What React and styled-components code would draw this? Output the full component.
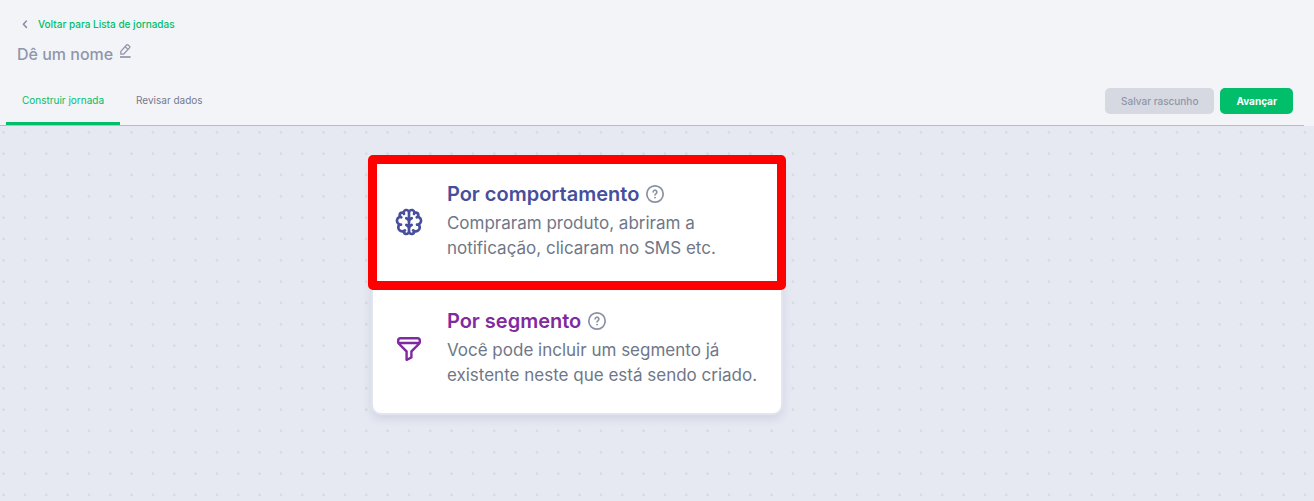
import React from 'react';
import styled, { createGlobalStyle } from 'styled-components';

const options = [
  {
    id: 'behavior',
    title: 'Por comportamento',
    text: 'Compraram produto, abriram a notificação, clicaram no SMS etc.',
    color: '#474f9c',
    highlighted: true,
  },
  {
    id: 'segment',
    title: 'Por segmento',
    text: 'Você pode incluir um segmento já existente neste que está sendo criado.',
    color: '#7f2a9f',
    highlighted: false,
  },
];

const halfBrain =
  'M12,2.78A3,3,0,0,0,7.18,4L7,4A3,3,0,0,0,4,7a3,3,0,0,0,0,.52,4,4,0,0,0-.55,6.59A4,4,0,0,0,7,20l.18,0A3,3,0,0,0,12,21.22ZM11,8.55a4.72,4.72,0,0,0-.68-.32,1,1,0,0,0-.64,1.9A2,2,0,0,1,11,12v1.55a4.72,4.72,0,0,0-.68-.32,1,1,0,0,0-.64,1.9A2,2,0,0,1,11,17v2a1,1,0,0,1-1,1,1,1,0,0,1-.91-.6,4.07,4.07,0,0,0,.48-.33,1,1,0,1,0-1.28-1.54A2,2,0,0,1,7,18a2,2,0,0,1-2-2,2,2,0,0,1,.32-1.06A3.82,3.82,0,0,0,6,15a1,1,0,0,0,0-2,1.84,1.84,0,0,1-.69-.13A2,2,0,0,1,5.25,9.1a3.1,3.1,0,0,0,.46.35,1,1,0,1,0,1-1.74.9.9,0,0,1-.34-.33A.92.92,0,0,1,6,7,1,1,0,0,1,7,6a.76.76,0,0,1,.21,0,3.85,3.85,0,0,0,.19.47,1,1,0,0,0,1.37.37A1,1,0,0,0,9.13,5.5,1.06,1.06,0,0,1,9,5a1,1,0,0,1,2,0Z';

const BrainIcon = () => (
  <svg width="32" height="32" viewBox="0 0 24 24" fill="currentColor" fillRule="evenodd" aria-hidden="true">
    <path d={halfBrain} />
    <path d={halfBrain} transform="translate(24 0) scale(-1 1)" />
  </svg>
);

const FilterIcon = () => (
  <svg width="32" height="32" viewBox="-1.3 -1.3 26.6 26.6" fill="currentColor" aria-hidden="true">
    <path d="M19,2H5A3,3,0,0,0,2,5V6.17a3,3,0,0,0,.25,1.2l0,.06a2.81,2.81,0,0,0,.59.86L9,14.41V21a1,1,0,0,0,.47.85A1,1,0,0,0,10,22a1,1,0,0,0,.45-.11l4-2A1,1,0,0,0,15,19V14.41l6.12-6.12a2.81,2.81,0,0,0,.59-.86l0-.06A3,3,0,0,0,22,6.17V5A3,3,0,0,0,19,2ZM13.29,13.29A1,1,0,0,0,13,14v4.38l-2,1V14a1,1,0,0,0-.29-.71L5.41,8H18.59ZM20,6H4V5A1,1,0,0,1,5,4H19a1,1,0,0,1,1,1Z" />
  </svg>
);

const HelpIcon = () => (
  <svg width="20" height="20" viewBox="0 0 20 20" fill="none" stroke="currentColor" strokeLinecap="round" aria-hidden="true">
    <circle cx="10" cy="10" r="8.2" strokeWidth="1.7" />
    <path d="M8.1 8a1.9 1.9 0 1 1 2.9 1.7c-.7.4-1 .7-1 1.3" strokeWidth="1.6" />
    <circle cx="10" cy="13.6" r="0.95" fill="currentColor" stroke="none" />
  </svg>
);

const PencilIcon = () => (
  <svg width="13" height="16" viewBox="0 0 13 16" fill="none" stroke="currentColor" strokeWidth="1.3" strokeLinejoin="round" aria-hidden="true">
    <path d="M1.8 11.2V8.4L7.6 2a1.1 1.1 0 0 1 1.6 0l1.3 1.3a1.1 1.1 0 0 1 0 1.6l-6 6.3z" />
    <path d="M6.2 3.6l2.8 2.9" />
    <path d="M1 14h10.6" strokeWidth="1.7" />
  </svg>
);

const ChevronIcon = () => (
  <svg width="6" height="10" viewBox="0 0 6 10" fill="none" stroke="currentColor" strokeWidth="1.6" strokeLinecap="round" strokeLinejoin="round" aria-hidden="true">
    <path d="M4.4 2L1.4 5.2l3 3.2" />
  </svg>
);

const dotX = [3.7, 25, 46.3];
const dotY = [6.3, 27.7, 49];

const Dots = () => (
  <DotLayer aria-hidden="true">
    <pattern id="dots" width="64" height="64" patternUnits="userSpaceOnUse">
      {dotY.map((y) => dotX.map((x) => <circle key={`${x}-${y}`} cx={x} cy={y} r="1.4" fill="#d8dbe1" />))}
    </pattern>
    <rect width="100%" height="100%" fill="url(#dots)" />
  </DotLayer>
);

const App = () => {
  return (
    <>
      <GlobalStyle />
      <Page>
        <Header>
          <BackLink href="#jornadas">
            <ChevronIcon />
            Voltar para Lista de jornadas
          </BackLink>
          <TitleRow>
            <Title>Dê um nome</Title>
            <EditButton aria-label="Editar nome">
              <PencilIcon />
            </EditButton>
          </TitleRow>
          <Toolbar>
            <Tabs>
              <Tab $active>Construir jornada</Tab>
              <Tab>Revisar dados</Tab>
            </Tabs>
            <Actions>
              <ActionButton disabled>Salvar rascunho</ActionButton>
              <ActionButton $primary>Avançar</ActionButton>
            </Actions>
          </Toolbar>
        </Header>
        <Canvas>
          <Dots />
          <Card>
            {options.map((item) => (
              <Option key={item.id}>
                <OptionIcon $color={item.color}>
                  {item.id === 'behavior' ? <BrainIcon /> : <FilterIcon />}
                </OptionIcon>
                <OptionBody>
                  <OptionHeading>
                    <OptionTitle $color={item.color}>{item.title}</OptionTitle>
                    <HelpButton aria-label={`Ajuda: ${item.title}`}>
                      <HelpIcon />
                    </HelpButton>
                  </OptionHeading>
                  <OptionText>{item.text}</OptionText>
                </OptionBody>
                {item.highlighted && <Highlight />}
              </Option>
            ))}
          </Card>
        </Canvas>
      </Page>
    </>
  );
};

export default App;

const GlobalStyle = createGlobalStyle`
  * {
    box-sizing: border-box;
  }

  body {
    margin: 0;
    font-family: Inter, 'Open Sans', sans-serif;
  }

  button {
    font-family: inherit;
    border: none;
    padding: 0;
    background: none;
    cursor: pointer;
  }

  svg {
    display: block;
  }
`;

const Page = styled.div`
  min-height: 100vh;
  display: flex;
  flex-direction: column;
  background-color: #e6e9f2;
`;

const Header = styled.header`
  display: flex;
  flex-direction: column;
  align-items: flex-start;
  padding-top: 16px;
  background-color: #f3f4f8;
`;

const BackLink = styled.a`
  display: flex;
  align-items: center;
  gap: 10px;
  margin-left: 22px;
  font-size: 10px;
  font-weight: 500;
  line-height: 16px;
  color: #00be6a;
  text-decoration: none;

  svg {
    color: #8b91a7;
  }
`;

const TitleRow = styled.div`
  display: flex;
  gap: 6px;
  margin: 10px 0 0 17px;
`;

const Title = styled.h1`
  margin: 0;
  font-size: 16px;
  font-weight: 500;
  line-height: 24px;
  color: #9096ab;
`;

const EditButton = styled.button`
  height: 18px;
  color: #9096ab;
`;

const Toolbar = styled.div`
  align-self: stretch;
  display: flex;
  justify-content: space-between;
  margin: 10px 10px 0 0;
  padding-left: 6px;
  border-bottom: 1px solid #b9bdcb;
`;

const Tabs = styled.nav`
  display: flex;
  margin-bottom: -1px;
`;

const Tab = styled.button`
  height: 49px;
  padding: 2px 16px 0;
  font-size: 10px;
  line-height: 16px;
  color: ${(props) => (props.$active ? '#00be6a' : '#747a8c')};
  border-bottom: 3px solid ${(props) => (props.$active ? '#00be6a' : 'transparent')};
  border-radius: 2px 2px 0 0;
`;

const Actions = styled.div`
  display: flex;
  align-items: center;
  gap: 6px;
  height: 49px;
  padding-right: 11px;
`;

const ActionButton = styled.button`
  height: 26px;
  padding: 0 16px;
  font-size: 10px;
  font-weight: ${(props) => (props.$primary ? 700 : 500)};
  color: ${(props) => (props.$primary ? '#ffffff' : '#9096a8')};
  background-color: ${(props) => (props.$primary ? '#00be6a' : '#d6d9e2')};
  border-radius: 5px;
`;

const Canvas = styled.main`
  position: relative;
  flex: 1;
  display: flex;
  align-items: flex-start;
  padding: 31px 28%;
`;

const DotLayer = styled.svg`
  position: absolute;
  inset: 0;
  width: 100%;
  height: 100%;
`;

const Card = styled.section`
  position: relative;
  flex: none;
  width: 412px;
  margin-left: 3px;
  background-color: #ffffff;
  border: 2px solid #e2e5ef;
  border-radius: 10px;
  box-shadow: 0 4px 8px rgba(60, 70, 110, 0.12);
`;

const Option = styled.div`
  position: relative;
  display: flex;
  align-items: center;
  gap: 22px;
  height: 127px;
  padding: 0 20px 2px;
`;

const OptionIcon = styled.span`
  flex: none;
  color: ${(props) => props.$color};
`;

const OptionBody = styled.div`
  padding-bottom: 3px;
`;

const OptionHeading = styled.div`
  display: flex;
  align-items: center;
  gap: 6px;
`;

const OptionTitle = styled.h2`
  margin: 0;
  font-size: 20px;
  font-weight: 600;
  line-height: 28px;
  color: ${(props) => props.$color};
`;

const HelpButton = styled.button`
  color: #8b91a5;
`;

const OptionText = styled.p`
  margin: 3px 0 0;
  font-size: 17px;
  line-height: 25px;
  color: #6f7787;
`;

const Highlight = styled.span`
  position: absolute;
  inset: -4px -5px;
  border: 9px solid #ff0000;
  border-radius: 5px;
  pointer-events: none;
`;
